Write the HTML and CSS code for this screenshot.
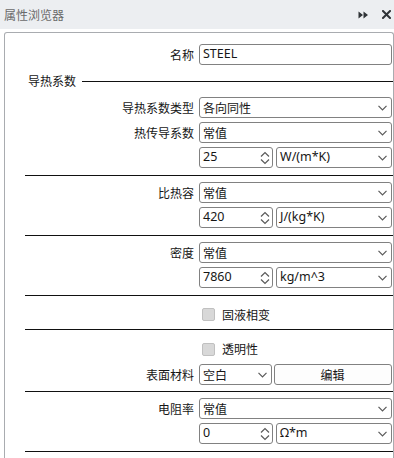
FILE: index.html
```html
<!DOCTYPE html>
<html lang="zh-CN">
<head>
<meta charset="utf-8">
<title>属性浏览器</title>
<link rel="stylesheet" href="styles.css">
</head>
<body>
<div class="titlebar">
  <span class="title">属性浏览器</span>
  <div class="tools">
    <svg class="ico" width="11" height="8" viewBox="0 0 11 8"><path d="M0.5 0.5 L5 4 L0.5 7.5Z M5.5 0.5 L10 4 L5.5 7.5Z" fill="#2f3337"/></svg>
    <svg class="ico" width="9" height="9" viewBox="0 0 9 9"><path d="M1 1 L8 8 M8 1 L1 8" stroke="#2f3337" stroke-width="2" stroke-linecap="square"/></svg>
  </div>
</div>
<div class="panel">
  <div class="sec first">
    <div class="row"><span class="lbl">名称</span><div class="field"><span class="lat">STEEL</span></div></div>
    <div class="header"><span>导热系数</span><i class="hline"></i></div>
    <div class="rows">
      <div class="row"><span class="lbl">导热系数类型</span><div class="field select"><span>各向同性</span><svg class="chev" width="9" height="6" viewBox="0 0 9 6"><path d="M0.5 0.8 L4.5 4.8 L8.5 0.8" fill="none" stroke="#5a5a5a" stroke-width="1.2"/></svg></div></div>
      <div class="row"><span class="lbl">热传导系数</span><div class="field select"><span>常值</span><svg class="chev" width="9" height="6" viewBox="0 0 9 6"><path d="M0.5 0.8 L4.5 4.8 L8.5 0.8" fill="none" stroke="#5a5a5a" stroke-width="1.2"/></svg></div></div>
      <div class="row"><span class="lbl"></span><div class="pair">
        <div class="field spin"><span class="lat">25</span><svg class="arrows" width="10" height="14" viewBox="0 0 10 14"><path d="M1 5.5 L5 1.5 L9 5.5 M1 8.5 L5 12.5 L9 8.5" fill="none" stroke="#5a5a5a" stroke-width="1.2"/></svg></div>
        <div class="field select"><span class="lat">W/(m*K)</span><svg class="chev" width="9" height="6" viewBox="0 0 9 6"><path d="M0.5 0.8 L4.5 4.8 L8.5 0.8" fill="none" stroke="#5a5a5a" stroke-width="1.2"/></svg></div>
      </div></div>
    </div>
  </div>
  <div class="sep"></div>
  <div class="sec">
    <div class="rows">
      <div class="row"><span class="lbl">比热容</span><div class="field select"><span>常值</span><svg class="chev" width="9" height="6" viewBox="0 0 9 6"><path d="M0.5 0.8 L4.5 4.8 L8.5 0.8" fill="none" stroke="#5a5a5a" stroke-width="1.2"/></svg></div></div>
      <div class="row"><span class="lbl"></span><div class="pair">
        <div class="field spin"><span class="lat">420</span><svg class="arrows" width="10" height="14" viewBox="0 0 10 14"><path d="M1 5.5 L5 1.5 L9 5.5 M1 8.5 L5 12.5 L9 8.5" fill="none" stroke="#5a5a5a" stroke-width="1.2"/></svg></div>
        <div class="field select"><span class="lat">J/(kg*K)</span><svg class="chev" width="9" height="6" viewBox="0 0 9 6"><path d="M0.5 0.8 L4.5 4.8 L8.5 0.8" fill="none" stroke="#5a5a5a" stroke-width="1.2"/></svg></div>
      </div></div>
    </div>
  </div>
  <div class="sep"></div>
  <div class="sec">
    <div class="rows">
      <div class="row"><span class="lbl">密度</span><div class="field select"><span>常值</span><svg class="chev" width="9" height="6" viewBox="0 0 9 6"><path d="M0.5 0.8 L4.5 4.8 L8.5 0.8" fill="none" stroke="#5a5a5a" stroke-width="1.2"/></svg></div></div>
      <div class="row"><span class="lbl"></span><div class="pair">
        <div class="field spin"><span class="lat">7860</span><svg class="arrows" width="10" height="14" viewBox="0 0 10 14"><path d="M1 5.5 L5 1.5 L9 5.5 M1 8.5 L5 12.5 L9 8.5" fill="none" stroke="#5a5a5a" stroke-width="1.2"/></svg></div>
        <div class="field select"><span class="lat">kg/m^3</span><svg class="chev" width="9" height="6" viewBox="0 0 9 6"><path d="M0.5 0.8 L4.5 4.8 L8.5 0.8" fill="none" stroke="#5a5a5a" stroke-width="1.2"/></svg></div>
      </div></div>
    </div>
  </div>
  <div class="sep"></div>
  <div class="sec single">
    <div class="row"><span class="lbl"></span><div class="cb"><i class="box"></i><span>固液相变</span></div></div>
  </div>
  <div class="sep"></div>
  <div class="sec mat-sec">
    <div class="rows">
      <div class="row check"><span class="lbl"></span><div class="cb"><i class="box"></i><span>透明性</span></div></div>
      <div class="row"><span class="lbl">表面材料</span><div class="pair mat">
        <div class="field select"><span>空白</span><svg class="chev" width="9" height="6" viewBox="0 0 9 6"><path d="M0.5 0.8 L4.5 4.8 L8.5 0.8" fill="none" stroke="#5a5a5a" stroke-width="1.2"/></svg></div>
        <div class="field button"><span>编辑</span></div>
      </div></div>
    </div>
  </div>
  <div class="sep"></div>
  <div class="sec">
    <div class="rows">
      <div class="row"><span class="lbl">电阻率</span><div class="field select"><span>常值</span><svg class="chev" width="9" height="6" viewBox="0 0 9 6"><path d="M0.5 0.8 L4.5 4.8 L8.5 0.8" fill="none" stroke="#5a5a5a" stroke-width="1.2"/></svg></div></div>
      <div class="row"><span class="lbl"></span><div class="pair">
        <div class="field spin"><span class="lat">0</span><svg class="arrows" width="10" height="14" viewBox="0 0 10 14"><path d="M1 5.5 L5 1.5 L9 5.5 M1 8.5 L5 12.5 L9 8.5" fill="none" stroke="#5a5a5a" stroke-width="1.2"/></svg></div>
        <div class="field select"><span class="lat">Ω*m</span><svg class="chev" width="9" height="6" viewBox="0 0 9 6"><path d="M0.5 0.8 L4.5 4.8 L8.5 0.8" fill="none" stroke="#5a5a5a" stroke-width="1.2"/></svg></div>
      </div></div>
    </div>
  </div>
  <div class="sep"></div>
</div>
</body>
</html>
```

FILE: styles.css
```css
* { box-sizing: border-box; }
html, body {
  margin: 0;
  padding: 0;
  width: 394px;
  height: 458px;
  overflow: hidden;
  background: #ffffff;
  font-family: "Noto Sans CJK SC", "Noto Sans", sans-serif;
  font-size: 12px;
  color: #161616;
}
.titlebar {
  height: 29px;
  background: #eceef1;
  display: flex;
  align-items: center;
  justify-content: space-between;
  padding: 0 3px 0 4px;
}
.title {
  color: #6a6a6a;
  font-size: 12px;
  line-height: 1;
}
.tools {
  display: flex;
  align-items: center;
  gap: 13px;
}
.ico { display: block; }
.panel {
  margin: 3px 0 0 4px;
  height: 440px;
  border: 1px solid #a9acb0;
  border-bottom: none;
  border-radius: 3px 3px 0 0;
}
.sec {
  padding: 6px 0 7px;
}
.sec.first {
  padding-top: 11px;
}
.sec.single {
  padding: 8px 0 4px;
}
.sec.mat-sec {
  padding: 8px 0 6px;
}
.rows {
  display: flex;
  flex-direction: column;
  gap: 4px;
}
.row {
  display: grid;
  grid-template-columns: 189px 193px;
  column-gap: 5px;
  height: 21px;
  align-items: center;
}
.row.check { height: 22px; }
.lbl {
  text-align: right;
  line-height: 1;
  white-space: nowrap;
}
.header {
  display: flex;
  align-items: center;
  height: 16px;
  margin: 8px 0;
  padding-left: 23px;
}
.header span { line-height: 1; }
.hline {
  flex: 1;
  height: 1px;
  background: #111;
  margin-left: 6px;
}
.sep {
  height: 1px;
  background: #111;
  margin-left: 20px;
}
.field {
  height: 21px;
  border: 1px solid #818181;
  border-radius: 3px;
  background: #fff;
  display: flex;
  align-items: center;
  padding: 0 4px 0 3px;
  line-height: 1;
  white-space: nowrap;
}
.select {
  justify-content: space-between;
}
.chev { display: block; margin-top: 1px; }
.spin {
  justify-content: space-between;
  padding-right: 2px;
}
.arrows { display: block; }
.lat {
  font-family: "Noto Sans", "Noto Sans CJK SC", sans-serif;
  font-size: 12.5px;
}
.pair {
  display: grid;
  grid-template-columns: 74px 1fr;
  column-gap: 3px;
}
.pair.mat {
  grid-template-columns: 73px 1fr;
  column-gap: 2px;
}
.button {
  justify-content: center;
  background: #fdfdfd;
}
.cb {
  display: flex;
  align-items: center;
  padding-left: 3px;
}
.box {
  width: 13px;
  height: 13px;
  border: 1px solid #c0c0c0;
  border-radius: 2px;
  background: #d8d8d8;
  margin-right: 7px;
}
.cb span { line-height: 1; }
```
